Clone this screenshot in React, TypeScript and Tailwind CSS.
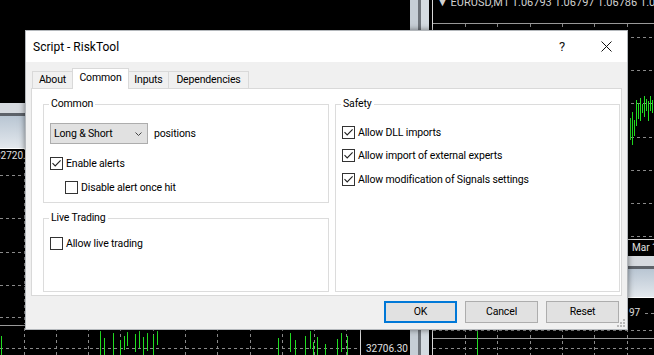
import type { ReactNode } from "react"

function Check({ checked }: { checked?: boolean }) {
  return (
    <span className="w-[13px] h-[13px] border border-[#333333] bg-white flex items-center justify-center shrink-0">
      {checked && (
        <svg width="11" height="11" viewBox="0 0 11 11">
          <path d="M1.5 5.2 L4.2 8 L9.6 2.4" fill="none" stroke="#222" strokeWidth="1.1" />
        </svg>
      )}
    </span>
  )
}

function CheckRow({ label, checked, className = "" }: { label: string; checked?: boolean; className?: string }) {
  return (
    <div className={`flex items-center gap-[3px] h-[13px] ${className}`}>
      <Check checked={checked} />
      <span className="leading-[13px]">{label}</span>
    </div>
  )
}

function Group({ title, className = "", children }: { title: string; className?: string; children?: ReactNode }) {
  return (
    <div className={`relative border border-[#dcdcdc] ${className}`}>
      <span className="absolute left-[5px] top-[-8px] bg-white px-[2px] leading-[14px]">{title}</span>
      {children}
    </div>
  )
}

function Band({ className = "" }: { className?: string }) {
  return (
    <div className={`absolute flex flex-col ${className}`}>
      <div className="h-[10px] bg-[#d6dadf]" />
      <div className="h-[3px] bg-[#5d6269]" />
      <div className="flex-1 bg-gradient-to-b from-[#b9c6d3] to-[#e3e8ed]" />
      <div className="h-[1px] bg-white" />
    </div>
  )
}

function ChartLines() {
  const hLeft = [175, 218, 252, 285, 317]
  const vLeft = [24, 56, 88, 120, 153, 185, 217, 250, 282, 314, 346]
  const hRight = [37, 70, 103, 137, 170, 203, 236]
  const vRight = [465, 497, 530, 562, 594, 627]
  const greenRight: [number, number, number][] = [
    [630, 118, 140], [632, 112, 145], [634, 120, 136], [636, 100, 126], [638, 103, 119],
    [640, 98, 121], [642, 104, 113], [644, 96, 117], [646, 99, 111], [648, 101, 121],
    [650, 96, 111], [652, 100, 113],
  ]
  const greenBottom: [number, number, number][] = [
    [1, 336, 355], [100, 331, 355], [104, 338, 355], [113, 333, 355], [120, 340, 355], [124, 336, 350],
    [127, 332, 346], [135, 334, 352], [139, 331, 348], [143, 337, 355], [147, 333, 351],
    [153, 335, 355], [157, 331, 345], [278, 338, 355], [290, 333, 352], [295, 340, 355],
    [305, 336, 355], [310, 331, 349], [313, 342, 355], [317, 337, 355], [325, 344, 355],
    [337, 339, 355], [341, 333, 352], [347, 336, 355], [477, 331, 355],
  ]
  return (
    <svg className="absolute inset-0" width="654" height="355" viewBox="0 0 654 355">
      <g stroke="#8a8a8a" strokeWidth="1" strokeDasharray="3 3" fill="none">
        {hLeft.map((y) => (
          <line key={`hl${y}`} x1="0" y1={y + 0.5} x2="360" y2={y + 0.5} />
        ))}
        {vLeft.map((x) => (
          <line key={`vl${x}`} x1={x + 0.5} y1="149" x2={x + 0.5} y2="324" />
        ))}
        {vLeft.map((x) => (
          <line key={`vb${x}`} x1={x + 0.5} y1="328" x2={x + 0.5} y2="355" />
        ))}
        <line x1="0" y1="348.5" x2="360" y2="348.5" />
        {hRight.map((y) => (
          <line key={`hr${y}`} x1="433" y1={y + 0.5} x2="654" y2={y + 0.5} />
        ))}
        {vRight.map((x) => (
          <line key={`vr${x}`} x1={x + 0.5} y1="24" x2={x + 0.5} y2="238" />
        ))}
        {vRight.map((x) => (
          <line key={`vr2${x}`} x1={x + 0.5} y1="299" x2={x + 0.5} y2="355" />
        ))}
        <line x1="645" y1="313.5" x2="654" y2="313.5" />
        <line x1="433" y1="330.5" x2="654" y2="330.5" />
        <line x1="433" y1="348.5" x2="654" y2="348.5" />
      </g>
      <g stroke="#9a9a9a" strokeWidth="1">
        <line x1="0" y1="325.5" x2="360" y2="325.5" />
        <line x1="433" y1="23.5" x2="654" y2="23.5" />
        <line x1="433" y1="338.5" x2="654" y2="338.5" />
      </g>
      <g stroke="#d8d8d8" strokeWidth="1">
        <line x1="433" y1="239.5" x2="654" y2="239.5" />
        <line x1="360.5" y1="328" x2="360.5" y2="355" />
        <line x1="432.5" y1="0" x2="432.5" y2="355" />
      </g>
      <g stroke="#22dd22" strokeWidth="1">
        {[...greenRight, ...greenBottom].map(([x, y1, y2], i) => (
          <line key={`g${i}`} x1={x + 0.5} y1={y1} x2={x + 0.5} y2={y2} />
        ))}
      </g>
    </svg>
  )
}

export default function App() {
  return (
    <div className="relative w-[654px] h-[355px] bg-black overflow-hidden font-[Roboto,sans-serif] text-[10.5px] tracking-[-0.15px] text-black">
      {/* chart terminal behind the dialog */}
      <Band className="left-0 top-[103px] w-[410px] h-[46px]" />
      <Band className="left-[433px] top-[256px] w-[221px] h-[42px]" />
      <div className="absolute left-[410px] top-0 w-[22px] h-[355px] flex">
        <div className="w-[8px] bg-[#c6ced6]" />
        <div className="w-[3px] bg-[#6d737a]" />
        <div className="w-[8px] bg-[#d4dbe1]" />
        <div className="w-[3px] bg-black" />
      </div>
      <ChartLines />
      <span className="absolute left-[437px] top-[-4px] text-[11px] leading-[13px] tracking-normal text-[#d0d0d0] whitespace-nowrap">
        ▼ EURUSD,M1 1.06793 1.06797 1.06786 1.06795
      </span>
      <span className="absolute left-[-5px] top-[150px] text-[10px] leading-[12px] tracking-normal text-[#e0e0e0] bg-black">32720.</span>
      <span className="absolute left-[632px] top-[242px] text-[10px] leading-[12px] tracking-normal text-[#e0e0e0] whitespace-nowrap">Mar 1</span>
      <span className="absolute left-[629px] top-[307px] text-[10px] leading-[12px] tracking-normal text-[#e0e0e0]">97</span>
      <span className="absolute left-[366px] top-[343px] text-[10px] leading-[12px] tracking-normal text-[#e0e0e0]">32706.30</span>

      {/* dialog */}
      <div className="absolute left-[25px] top-[30px] w-[603px] h-[300px] bg-[#f0f0f0] border border-[#b4b8bc] flex flex-col shadow-[0_0_6px_rgba(0,0,0,0.5)]">
        <div className="h-[31px] bg-white flex items-center pl-[7px] pr-[15px] shrink-0">
          <span className="text-[12px] leading-[14px] tracking-normal">Script - RiskTool</span>
          <span className="ml-auto text-[13px] leading-[14px] text-[#111] mr-[36px]">?</span>
          <svg width="11" height="11" viewBox="0 0 11 11">
            <path d="M0.5 0.5 L10.5 10.5 M10.5 0.5 L0.5 10.5" stroke="#111" strokeWidth="1" fill="none" />
          </svg>
        </div>

        <div className="mx-[5px] mt-[6px] flex flex-col">
          <div className="h-[20px] flex items-end pl-[1px]">
            <div className="w-[41px] h-[17px] border border-b-0 border-[#d9d9d9] bg-[#f0f0f0] flex items-center justify-center">About</div>
            <div className="w-[57px] h-[21px] -ml-px -mb-px relative z-10 border border-b-0 border-[#d9d9d9] bg-white flex items-center justify-center pb-[2px]">Common</div>
            <div className="w-[41px] h-[17px] -ml-px border border-b-0 border-[#d9d9d9] bg-[#f0f0f0] flex items-center justify-center">Inputs</div>
            <div className="w-[81px] h-[17px] -ml-px border border-b-0 border-[#d9d9d9] bg-[#f0f0f0] flex items-center justify-center">Dependencies</div>
          </div>
          <div className="h-[208px] bg-white border border-[#d9d9d9] flex gap-[6px] pl-[11px] pr-[1px] pt-[15px] pb-[3px]">
            <div className="w-[286px] flex flex-col gap-[15px]">
              <Group title="Common" className="h-[99px] pt-[18px] pl-[6px]">
                <div className="flex items-center gap-[6px]">
                  <div className="w-[98px] h-[21px] bg-[#e1e1e1] border border-[#adadad] flex items-center pl-[3px] pr-[5px]">
                    <span>Long &amp; Short</span>
                    <svg className="ml-auto" width="7" height="4" viewBox="0 0 7 4">
                      <path d="M0.5 0.5 L3.5 3.5 L6.5 0.5" stroke="#444" strokeWidth="1" fill="none" />
                    </svg>
                  </div>
                  <span>positions</span>
                </div>
                <CheckRow label="Enable alerts" checked className="mt-[13px]" />
                <CheckRow label="Disable alert once hit" className="mt-[11px] ml-[15px]" />
              </Group>
              <Group title="Live Trading" className="flex-1 pt-[18px] pl-[6px]">
                <CheckRow label="Allow live trading" />
              </Group>
            </div>
            <Group title="Safety" className="flex-1 pt-[21px] pl-[6px]">
              <CheckRow label="Allow DLL imports" checked />
              <CheckRow label="Allow import of external experts" checked className="mt-[10px]" />
              <CheckRow label="Allow modification of Signals settings" checked className="mt-[11px]" />
            </Group>
          </div>
        </div>

        <div className="mt-[5px] flex justify-end gap-[8px] pr-[8px]">
          <button className="w-[73px] h-[22px] bg-[#e1e1e1] border-2 border-[#0078d7] flex items-center justify-center">OK</button>
          <button className="w-[73px] h-[22px] bg-[#e1e1e1] border border-[#adadad] flex items-center justify-center">Cancel</button>
          <button className="w-[73px] h-[22px] bg-[#e1e1e1] border border-[#adadad] flex items-center justify-center">Reset</button>
        </div>
        <svg className="absolute right-[2px] bottom-[2px]" width="8" height="8" viewBox="0 0 8 8">
          <g fill="#b8b8b8">
            <rect x="6" y="0" width="2" height="2" />
            <rect x="3" y="3" width="2" height="2" />
            <rect x="6" y="3" width="2" height="2" />
            <rect x="0" y="6" width="2" height="2" />
            <rect x="3" y="6" width="2" height="2" />
            <rect x="6" y="6" width="2" height="2" />
          </g>
        </svg>
      </div>
    </div>
  )
}
